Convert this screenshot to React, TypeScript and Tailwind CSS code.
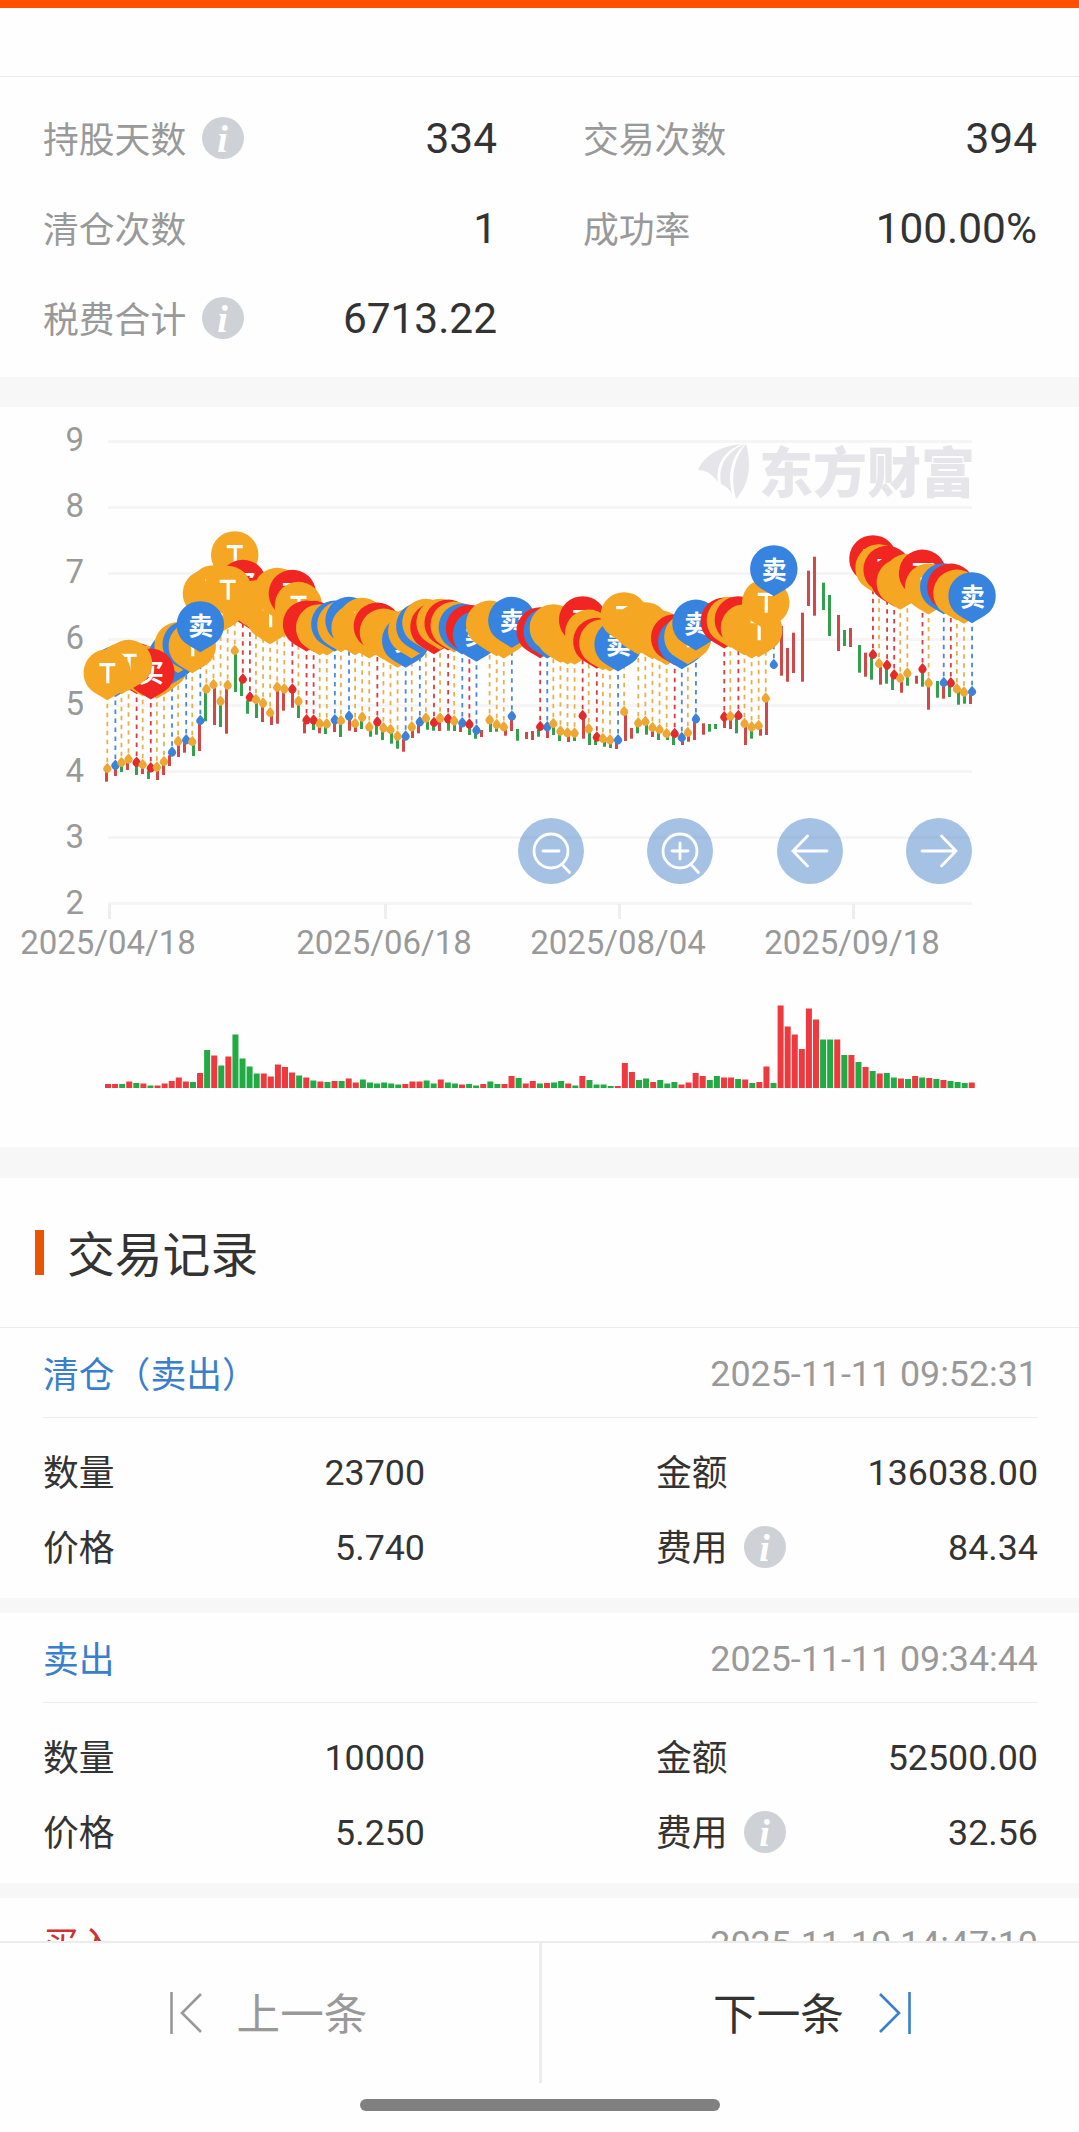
import { type JSX } from "react"

type Kind = "T" | "B" | "S"

interface Marker {
    day: number
    kind: Kind
    y: number
}

interface TradeRecord {
    title: string
    color: string
    time: string
    amount: string
    price: string
    total: string
    fee: string
}

const COLORS: { [key in Kind]: string } = { T: '#f5a623', B: '#f12622', S: '#3683e0' }
const LINES: { [key in Kind]: string } = { T: '#e8b04d', B: '#dc3a3c', S: '#4a88d4' }

// one letter per trading day, r = up, g = down
const TREND =
    'rrgrgrgrrrrrgrgrgrggggrrrrrgrgrgrgrrggggggrrrggrggrggrg' +
    'grrgrrgrggrgrggggrrrggrgggrrrrggrrgrgrrgrrrrrrggrgrgrgrggrgrgrgrgggr'

const VOLUMES = [
    4, 4, 4, 6.5, 5, 4.5, 2.5, 2.5, 4.5, 7, 10.5, 6.5, 6, 15, 38, 32.5, 22.5, 31.5, 53.5, 29.5,
    21.5, 14.5, 14.5, 11.5, 23.5, 21, 15.5, 12.5, 10.5, 7.5, 6.5, 6, 7, 7, 9.5, 5.5, 8.5, 5.5, 4.5, 5.5,
    4.5, 3.5, 4, 6.5, 6.5, 7.5, 4.5, 8.5, 5.5, 4.5, 3.5, 4, 2.5, 4, 6.5, 4, 4, 12, 10, 4.5,
    7, 4.5, 5, 5.5, 7, 4.5, 2.5, 12, 8, 3.5, 3.5, 2, 2, 25, 16, 8, 9.5, 6, 8, 4.5,
    6, 3.5, 5.5, 15, 12, 8, 12, 10.5, 10.5, 9, 8.5, 5, 6, 21.5, 5, 82.5, 61.5, 53.5, 39, 79.5,
    68.5, 48.5, 48.5, 48.5, 33, 33, 26, 21, 17, 14.5, 15, 10.5, 9.5, 9, 12, 10.5, 10, 9, 8, 7,
    6, 5, 5.5,
]

const MARKERS: Marker[] = [
    ['T', 768.7], ['S', 765.5], ['T', 762.7], ['T', 759.3], ['B', 762.5], ['T', 764.7], ['B', 768], ['T', 767.3],
    ['T', 761.7], ['S', 752.3], ['T', 741.5], ['S', 740], ['T', 741.7], ['S', 720.7], ['T', 689.3], ['T', 684.7],
    ['T', 701.3], ['T', 685.3], ['T', 650.7], ['B', 679.3], ['B', 697.3], ['T', 699.7], ['T', 703.3], ['T', 712.7],
    ['T', 687.3], ['T', 689], ['B', 689.3], ['T', 701.3], ['B', 720], ['B', 720.3], ['T', 723.7], ['T', 724],
    ['S', 720], ['T', 720.7], ['S', 716.3], ['T', 723.7], ['T', 717.3], ['T', 727], ['B', 722], ['T', 728],
    ['T', 729.7], ['T', 736.3], ['S', 736.3], ['T', 727], ['S', 722], ['T', 718.3], ['B', 722.7], ['T', 718.3],
    ['B', 719], ['T', 721], ['S', 723], ['B', 724.3], ['S', 730.3], null, ['T', 720], ['T', 724.7],
    ['T', 727], ['S', 716.3], null, null, null, ['B', 726.7], ['S', 727], ['T', 723.7],
    ['T', 731.3], ['T', 733], ['T', 733.3], ['B', 715.7], ['T', 729], ['B', 737.3], ['T', 738.7], ['T', 740],
    ['S', 740], ['T', 711.7], null, ['T', 723], ['T', 721.7], ['T', 727.7], ['T', 729.7], ['T', 733.7],
    ['B', 733.7], ['S', 737.7], ['T', 732.7], ['S', 719], null, null, null, ['B', 717],
    ['T', 716.3], ['B', 715.7], ['T', 723.7], ['T', 727], ['T', 725.7], ['T', 698.3], ['S', 664.7], null,
    null, null, null, null, null, null, null, null,
    null, null, null, null, ['B', 654.7], ['T', 663.7], ['B', 665.3], ['B', 675],
    ['T', 678.3], ['T', 673.3], null, ['B', 669], ['T', 683], null, ['S', 682.7], ['B', 683],
    ['T', 689], ['T', 692.3], ['S', 691.7],
].flatMap((m: any, day) => m ? [{ day, kind: m[0], y: m[1] }] : [])

// lowest point of every day
const LOWS = [
    781.7, 776, 772, 770, 775, 774, 779, 780, 775, 766, 757, 752.7, 756, 751, 721.3, 725,
    727, 733.7, 692, 696, 713.7, 718, 722, 725, 723.7, 710.7, 707.7, 718, 733.3, 730, 733.3, 734,
    732, 737, 730.7, 732, 729, 736.7, 734.7, 740, 743.7, 748.7, 751.7, 738, 733.3, 729.7, 730.7, 731,
    730.7, 731, 732, 735, 738.7, 737, 732, 731.7, 735.7, 731, 740.7, 739, 740, 736.7, 738, 735,
    741, 742, 741, 738.7, 745, 745, 746.7, 748, 749, 741, 738.7, 733.3, 734.7, 737, 740, 740,
    745, 745, 741.7, 740, 734.7, 731.7, 729, 728, 729, 733.3, 745, 738.7, 735.7, 735, 668, 675.7,
    681.7, 673, 681.7, 606, 615.7, 610, 636, 651, 646, 647, 672.7, 676.7, 679.7, 684.7, 683.7, 690,
    692.7, 685.7, 683.7, 686.7, 709.7, 697.7, 698.7, 697, 704.7, 703.7, 704,
]

// highs for the days that carry no marker
const HIGHS: { [day: number]: number } = {
    53: 730, 58: 729, 59: 732, 60: 731, 74: 728, 84: 723.3, 85: 724, 86: 724, 95: 626, 96: 648,
    97: 632.7, 98: 612.7, 99: 570.7, 100: 556.7, 101: 582.7, 102: 595, 103: 615, 104: 630, 105: 628,
    106: 645, 107: 652.7, 114: 675.7, 117: 681,
}

// pins which do not follow the day order when they overlap
const PIN_ORDER = [1, 2, 4, 5, 7, 8, 9, 10, 11, 12, 6, 3, 0, 18, 19, 20, 14, 15, 16, 17, 13]

const PINS = [
    ...PIN_ORDER.map(day => MARKERS.find(m => m.day === day)!),
    ...MARKERS.filter(m => m.day > 20),
]

const RECORDS: TradeRecord[] = [
    { title: '清仓（卖出）', color: 'text-[#3a7fcd]', time: '2025-11-11 09:52:31', amount: '23700', price: '5.740', total: '136038.00', fee: '84.34' },
    { title: '卖出', color: 'text-[#3a7fcd]', time: '2025-11-11 09:34:44', amount: '10000', price: '5.250', total: '52500.00', fee: '32.56' },
    { title: '买入', color: 'text-[#d03030]', time: '2025-11-10 14:47:10', amount: '5000', price: '5.230', total: '26150.00', fee: '5.26' },
]

function markerX(marker: Marker) {
    return 107.3 + marker.day * 7.08 + (marker.kind === 'T' ? 0 : 1)
}

function stickX(day: number) {
    return 105 + 3 * Math.ceil(day * 2.3623 - 0.27)
}

function InfoIcon(): JSX.Element {
    return (
        <svg className="ml-4 h-[42px] w-[42px] shrink-0" viewBox="0 0 42 42">
            <circle cx="21" cy="21" r="21" fill="#ced1d6" />
            <text x="20.5" y="34.5" textAnchor="middle" fill="#fff" fontSize="38" fontStyle="italic" fontWeight="700" fontFamily="'Liberation Serif', serif">i</text>
        </svg>
    )
}

function Stat({ label, value, info }: { label: string, value: string, info?: boolean }): JSX.Element {
    return (
        <div className="flex h-[90px] items-center">
            <span className="pt-[6px] text-[35.8px] text-[#999]">{label}</span>
            {info && <div className="pb-[2px]"><InfoIcon /></div>}
            <span className="ml-auto text-[42.4px] text-[#333]">{value}</span>
        </div>
    )
}

function Pin({ marker }: { marker: Marker }): JSX.Element {
    return (
        <g transform={`translate(${markerX(marker)} ${marker.y - 95.5})`}>
            <path d="M-18.5 14.5A23.7 23.7 0 1 1 18.5 14.5C15 18.500 8 22 0 27C-8 22-15 18.500-18.500 14.500Z" fill={COLORS[marker.kind]} />
            {marker.kind === 'T' ? (
                <path d="M-8-8.500H8M0.500-8.500V10" fill="none" stroke="#fff" strokeWidth="3.2" />
            ) : (
                <text x="0.5" y="9.5" textAnchor="middle" fontSize="25" fontWeight="700" fill="#fff">{marker.kind === 'S' ? '卖' : '买'}</text>
            )}
        </g>
    )
}

function Chart(): JSX.Element {
    return (
        <svg className="block h-[740px] w-full" viewBox="0 407 1079 740">
            {/* watermark */}
            <g fill="#e6e6ea">
                <path d="M698 470C704 456 719 446 742 444C722 452 716 466 718 482C712 474 706 470 698 470Z" />
                <path d="M721 484C718 466 726 452 745 444C730 458 728 474 732 494C729 489 726 486 721 484Z" />
                <path d="M736 499C730 478 734 458 746 444C751 462 751 482 736 499Z" />
                <text x="759" y="493" fontSize="54" fontWeight="900">东方财富</text>
            </g>
            {[9, 8, 7, 6, 5, 4, 3, 2].map((n, i) => (
                <g key={n}>
                    <rect x="108" y={440 + i * 66} width="864" height="3" fill="#f5f5f5" />
                    <text x="84" y={450.7 + i * 66.17} textAnchor="end" fontSize="33" fill="#999">{n}</text>
                </g>
            ))}
            {['2025/04/18', '2025/06/18', '2025/08/04', '2025/09/18'].map((date, i) => {
                const x = [109.5, 385.5, 619.5, 853.5][i]
                return (
                    <g key={date}>
                        <rect x={x - 1.5} y="904" width="3" height="15" fill="#eee" />
                        <text x={x - 1.5} y="954" textAnchor="middle" fontSize="33" fill="#999">{date}</text>
                    </g>
                )
            })}

            {LOWS.map((low, day) => {
                const marker = MARKERS.find(m => m.day === day)
                const top = marker ? marker.y + 3 : HIGHS[day]
                return <rect key={day} x={stickX(day)} y={top} width="3" height={Math.max(low - top, 0)} fill={TREND[day] === 'r' ? '#d04848' : '#32a04c'} />
            })}

            {MARKERS.map(m => {
                const x = markerX(m)
                return (
                    <g key={m.day}>
                        <line x1={x} x2={x} y1={m.y - 74} y2={m.y} stroke={LINES[m.kind]} strokeWidth="1.8" strokeDasharray="4.500 4.500" />
                        <path d={`M${x} ${m.y - 6}L${x + 3.2} ${m.y - 2.2}A4 4 0 1 1 ${x - 3.2} ${m.y - 2.2}Z`} fill={m.kind === 'T' ? '#efa733' : m.kind === 'B' ? '#e22c2c' : '#3d82d8'} />
                    </g>
                )
            })}
            {PINS.map(m => <Pin key={m.day} marker={m} />)}

            {VOLUMES.map((v, day) => (
                <rect key={day} x={105 + day * 7.08} y={1088 - v} width="6" height={v} fill={TREND[day] === 'r' ? '#ee3a3e' : '#22aa45'} />
            ))}

            {[551, 680, 810, 939].map((x, i) => (
                <g key={x} transform={`translate(${x} 851)`} fill="none" stroke="#fff" strokeWidth="2.8" strokeLinecap="round">
                    <circle r="33" fill="#4b85c9" fillOpacity="0.5" stroke="none" />
                    {i < 2 && <path d="M-8 0H8M11 13.500L18.5 21.500" />}
                    {i < 2 && <circle r="17" />}
                    {i === 1 && <path d="M0-8V8" />}
                    {i === 2 && <path d="M17 0H-17M-2.500-15L-17 0L-2.500 15" />}
                    {i === 3 && <path d="M-17 0H17M2.500-15L17 0L2.500 15" />}
                </g>
            ))}
        </svg>
    )
}

function RecordItem({ record }: { record: TradeRecord }): JSX.Element {
    return (
        <div className="shrink-0 border-b-[15px] border-[#f7f7f7] pr-[41px] pl-[43px] text-[35.8px]">
            <div className="flex h-[90px] items-center justify-between border-b border-[#ececec] pt-1">
                <span className={`pt-1 ${record.color}`}>{record.title}</span>
                <span className="pt-px text-[#999]">{record.time}</span>
            </div>
            <div className="grid h-[180px] grid-cols-[382px_382px] grid-rows-[75px_75px] justify-between pt-[18px] text-[#333]">
                <div className="flex items-center justify-between">
                    <span className="pt-[2px]">数量</span>
                    <span>{record.amount}</span>
                </div>
                <div className="flex items-center justify-between">
                    <span className="pt-[2px]">金额</span>
                    <span>{record.total}</span>
                </div>
                <div className="flex items-center justify-between">
                    <span className="pt-[2px]">价格</span>
                    <span>{record.price}</span>
                </div>
                <div className="flex items-center">
                    <span className="pt-[2px]">费用</span>
                    <div className="pb-1"><InfoIcon /></div>
                    <span className="ml-auto">{record.fee}</span>
                </div>
            </div>
        </div>
    )
}

export default function App(): JSX.Element {
    return (
        <div className="flex h-[2132px] w-[1079px] flex-col overflow-hidden bg-[#fefefe] font-[Roboto,'Noto_Sans_CJK_SC',sans-serif] leading-none">
            <main className="flex min-h-0 flex-1 flex-col overflow-hidden">
                <div className="h-[77px] shrink-0 border-t-8 border-b border-t-[#ff5000] border-b-[#ececec]"></div>
                <section className="grid h-[330px] shrink-0 grid-cols-[454px_454px] content-start justify-between border-b-[30px] border-[#f7f7f7] pt-[17px] pr-[42px] pl-[43px]">
                    <Stat label="持股天数" value="334" info />
                    <Stat label="交易次数" value="394" />
                    <Stat label="清仓次数" value="1" />
                    <Stat label="成功率" value="100.00%" />
                    <Stat label="税费合计" value="6713.22" info />
                </section>
                <section className="shrink-0 border-b-[31px] border-[#f7f7f7]">
                    <Chart />
                </section>
                <div className="flex h-[150px] shrink-0 items-center border-b border-[#ececec] pl-[35px]">
                    <span className="h-[45px] w-[9px] bg-[#ea5504]"></span>
                    <h2 className="ml-[23px] pt-2 text-[47.8px] text-[#333]">交易记录</h2>
                </div>
                {RECORDS.map(record => <RecordItem key={record.time} record={record} />)}
            </main>
            <footer className="h-[191px] shrink-0 border-t-2 border-[#ececec]">
                <div className="grid h-[140px] grid-cols-[542px_537px] text-[43.6px]">
                    <button className="flex items-center justify-center gap-[34px] border-r-[3px] border-[#ececec] pr-[2px] text-[#999]">
                        <svg className="h-[42px] w-[33px]" viewBox="0 0 33 42" fill="none" stroke="currentColor" strokeWidth="2.6">
                            <path d="M1.500 0V42M31 2L12 21L31 40" />
                        </svg>
                        <span className="pt-[6px]">上一条</span>
                    </button>
                    <button className="flex items-center justify-center gap-[34px] pl-[3px] text-[#333]">
                        <span className="pt-[6px]">下一条</span>
                        <svg className="h-[42px] w-[33px]" viewBox="0 0 33 42" fill="none" stroke="#3a7fcd" strokeWidth="2.6">
                            <path d="M31.500 0V42M2 2L21 21L2 40" />
                        </svg>
                    </button>
                </div>
                <div className="mx-auto mt-4 h-3 w-[360px] rounded-full bg-[#808080]"></div>
            </footer>
        </div>
    )
}
